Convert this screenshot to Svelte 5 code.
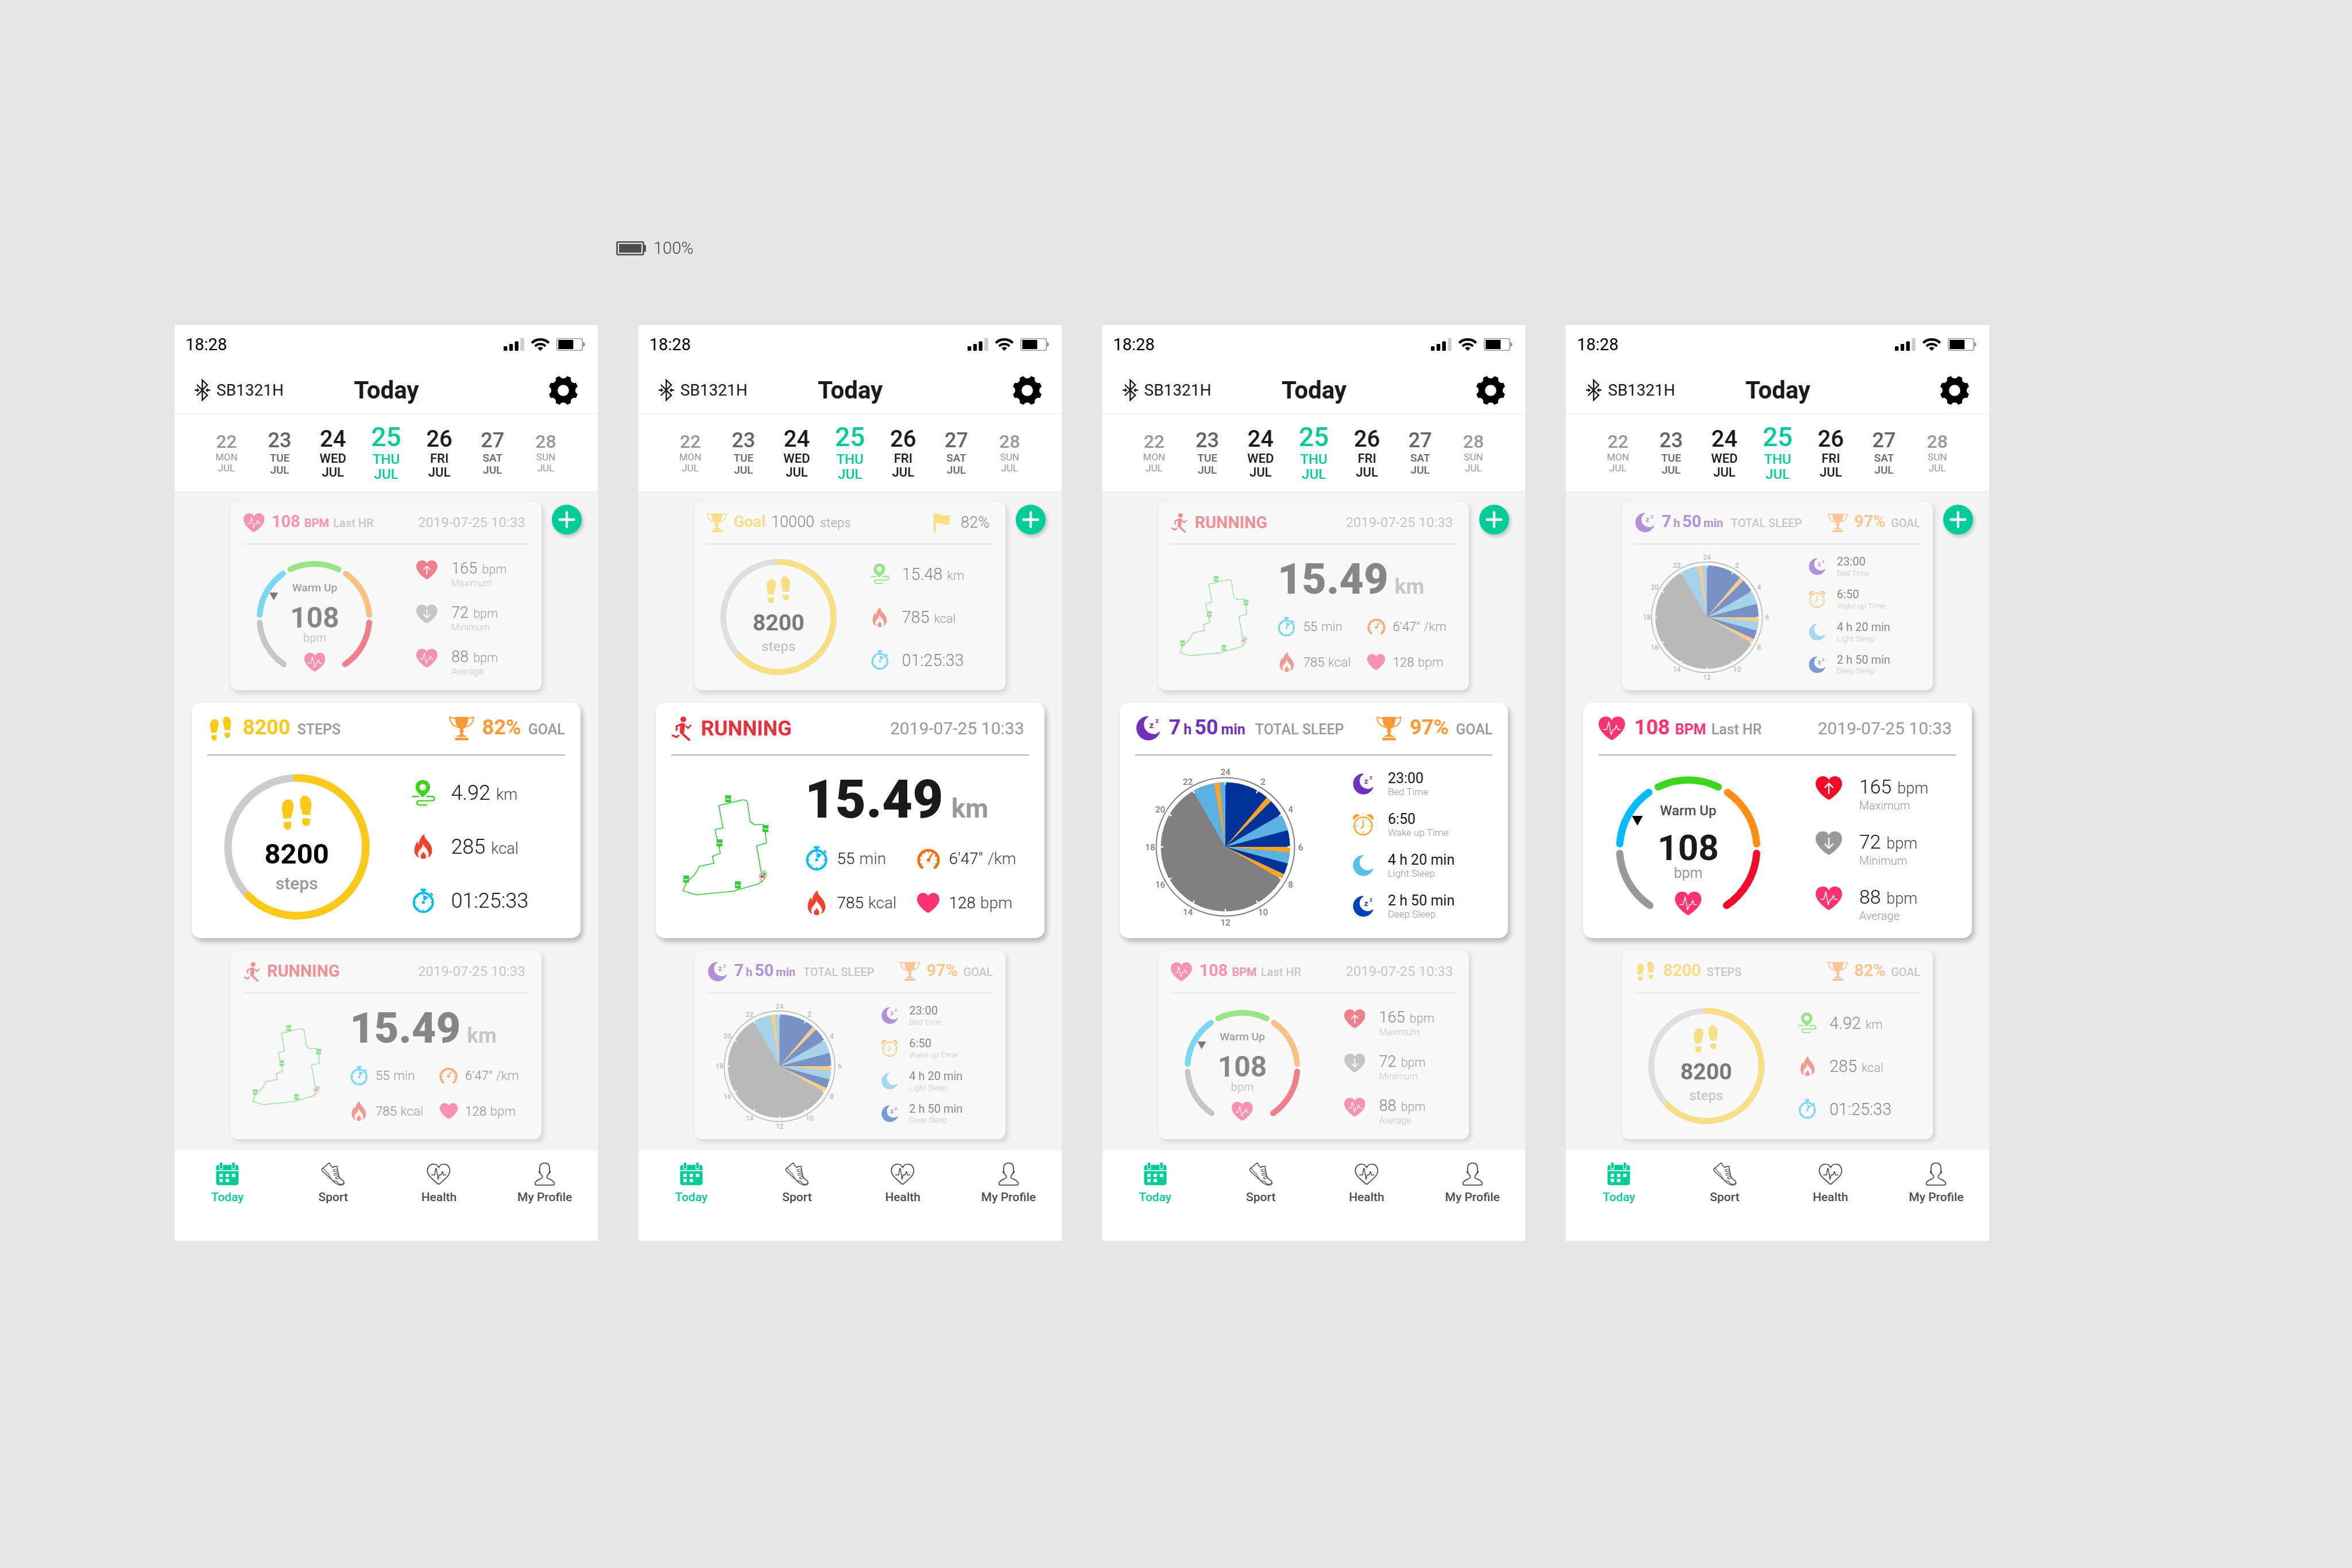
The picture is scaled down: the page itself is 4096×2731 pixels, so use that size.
<script>
  const days = [
    { num: 22, name: 'MON', size: 'far' },
    { num: 23, name: 'TUE', size: 'mid' },
    { num: 24, name: 'WED', size: 'near' },
    { num: 25, name: 'THU', size: 'today' },
    { num: 26, name: 'FRI', size: 'near' },
    { num: 27, name: 'SAT', size: 'mid' },
    { num: 28, name: 'SUN', size: 'far' }
  ];

  const tabs = [
    { label: 'Today', icon: 'calendar', active: true },
    { label: 'Sport', icon: 'shoe' },
    { label: 'Health', icon: 'health' },
    { label: 'My Profile', icon: 'person' }
  ];

  const screens = [
    ['hr', 'steps', 'running'],
    ['goal', 'running', 'sleep'],
    ['running', 'sleep', 'hr'],
    ['sleep', 'hr', 'steps']
  ];

  const stepStats = [
    { icon: 'pin', value: '4.92', unit: 'km' },
    { icon: 'flame', value: '285', unit: 'kcal' },
    { icon: 'watch', value: '01:25:33', unit: '' }
  ];

  const goalStats = [
    { icon: 'pin', value: '15.48', unit: 'km' },
    { icon: 'flame', value: '785', unit: 'kcal' },
    { icon: 'watch', value: '01:25:33', unit: '' }
  ];

  const runStats = [
    { icon: 'watch', value: '55', unit: 'min' },
    { icon: 'gauge', value: '6\'47"', unit: '/km' },
    { icon: 'flame', value: '785', unit: 'kcal' },
    { icon: 'heart', value: '128', unit: 'bpm' }
  ];

  const hrStats = [
    { icon: 'heartUp', value: 165, label: 'Maximum' },
    { icon: 'heartDown', value: 72, label: 'Minimum' },
    { icon: 'heartBeat', value: 88, label: 'Average' }
  ];

  const sleepStats = [
    { icon: 'moonPurple', value: '23:00', label: 'Bed Time' },
    { icon: 'alarm', value: '6:50', label: 'Wake up Time' },
    { icon: 'moonLight', value: '4 h 20 min', label: 'Light Sleep' },
    { icon: 'moonDeep', value: '2 h 50 min', label: 'Deep Sleep' }
  ];

  const DEEP = '#003399';
  const LIGHT = '#5ab3e0';
  const AWAKE = '#ffa426';
  const slices = [
    [-30, -10, LIGHT],
    [-10, -5, AWAKE],
    [-5, 0, LIGHT],
    [0, 40, DEEP],
    [40, 45, AWAKE],
    [45, 60, DEEP],
    [60, 75, LIGHT],
    [75, 90, DEEP],
    [90, 95, AWAKE],
    [95, 105, LIGHT],
    [105, 115, DEEP],
    [115, 120, AWAKE]
  ];
  const hours = [24, 2, 4, 6, 8, 10, 12, 14, 16, 18, 20, 22];

  const zones = [
    [-146, -94, '#999999'],
    [-86, -35, '#00bbff'],
    [-26, 26, '#3cd621'],
    [35, 86, '#ff8f12'],
    [94, 146, '#f20a26']
  ];

  const flags = [
    { x: 86, y: 9, km: 2 },
    { x: 151, y: 61, km: 1 },
    { x: 71, y: 86, km: 3 },
    { x: 13, y: 149, km: 4 },
    { x: 103, y: 159, km: 5 }
  ];

  // Angle 0 points up and grows clockwise.
  function polar(cx, cy, r, deg) {
    const a = (deg * Math.PI) / 180;
    return [cx + r * Math.sin(a), cy - r * Math.cos(a)].map((n) => n.toFixed(2)).join(' ');
  }
  function arc(cx, cy, r, from, to) {
    const large = to - from > 180 ? 1 : 0;
    return `M${polar(cx, cy, r, from)}A${r} ${r} 0 ${large} 1 ${polar(cx, cy, r, to)}`;
  }
  function slice(cx, cy, r, from, to) {
    return `${arc(cx, cy, r, from, to)}L${cx} ${cy}Z`;
  }
  function angles(n, step, start = 0) {
    return Array.from({ length: n }, (_, i) => start + i * step);
  }
</script>

{#snippet heartShape(color)}
  <path
    fill={color}
    d="M22.5 40C20 40 0 25.5 0 13C0 5 5.5 0 12 0C17 0 21 2.6 22.5 6.5C24 2.6 28 0 33 0C39.5 0 45 5 45 13C45 25.5 25 40 22.5 40Z"
  />
{/snippet}

{#snippet beat(color, width)}
  <path
    fill="none"
    stroke={color}
    stroke-width={width}
    stroke-linejoin="round"
    stroke-linecap="round"
    d="M8.6 22H13.8L17.3 8.8L21.4 31L24.8 22H27.5L30.2 15L32.8 22H36.8"
  />
{/snippet}

{#snippet moon(color, zz)}
  <svg width="41" height="43" viewBox="0 0 41 43" aria-hidden="true">
    <path
      fill={color}
      d="M20.4 .3C9 .8 0 9.5 0 21.3C0 33 9.5 42.6 21 42.6C30 42.6 38 37 40.9 28.6C41 27.6 40 27.2 39.3 27.9C36 31 32 32 28.5 31.3C20 30 13.3 24 13.3 15.5C13.3 9.5 15.5 5 20.8 1.6C21.5 1 21 .3 20.4 .3Z"
    />
    {#if zz}
      <text class="zed" x="22.5" y="20.5" font-size="15" fill={color}>z</text>
      <text class="zed" x="33.3" y="12" font-size="11" fill={color}>z</text>
    {/if}
  </svg>
{/snippet}

{#snippet icon(name)}
  {#if name === 'pin'}
    <svg width="41" height="46" viewBox="34 40 182 204" aria-hidden="true">
      <path
        fill="#3cd621"
        fill-rule="evenodd"
        d="M120 42C88 42 64 66 64 97C64 122 80 138 93 151L113 172Q120 181 127 172L147 151C160 138 176 122 176 97C176 66 152 42 120 42ZM120 73A25 25 0 1 1 119.9 73Z"
      />
      <path
        fill="none"
        stroke="#3cd621"
        stroke-width="11"
        stroke-linecap="round"
        d="M41 169.500H88M152 169.500H192A16.500 16.500 0 0 1 192 202.500H91A16.500 16.500 0 0 0 91 235.500H150"
      />
    </svg>
  {:else if name === 'flame'}
    <svg width="32" height="45" viewBox="54 456 140 198" aria-hidden="true">
      <path
        fill="#f5402a"
        d="M133 458C129 485 150 502 165 520C181 540 192 560 192 585C192 612 178 632 157 641C165 630 168 620 166 607C162 580 143 570 122 535C119 560 104 572 92 587C80 603 80 622 92 641C70 632 57 610 57 585C57 555 68 530 84 510C82 522 84 530 90 539C92 510 105 480 133 458Z"
      />
      <path
        fill="#f5402a"
        d="M126 591C128 605 146 612 146 630C146 643 137 650 125 650C112 650 103 642 103 630C103 615 122 607 126 591Z"
      />
    </svg>
  {:else if name === 'watch'}
    <svg width="38" height="44" viewBox="40 868 168 192" aria-hidden="true">
      <g fill="#00bbff">
        <rect x="103" y="870" width="44" height="17" rx="7" />
        <rect x="113" y="884" width="23" height="18" />
        <g transform="rotate(45 184 916)">
          <rect x="172" y="903" width="28" height="9" rx="4" />
          <rect x="180" y="908" width="11" height="16" />
        </g>
        <circle cx="125" cy="976" r="73" fill="none" stroke="#00bbff" stroke-width="17" />
        {#each angles(8, 45) as a}
          <rect x="121.500" y="909" width="7" height="13" rx="3" transform="rotate({a} 125 976)" />
        {/each}
        <path d="M125 923C140 923 152 929 162 939L138 962L125 960Z" />
        <circle cx="125" cy="976" r="11.500" />
      </g>
    </svg>
  {:else if name === 'gauge'}
    <svg width="40" height="35" viewBox="0 0 40 35" aria-hidden="true">
      <path
        d={arc(20, 20, 17.3, -140, 140)}
        fill="none"
        stroke="#ff6a00"
        stroke-width="4.400"
        stroke-linecap="round"
      />
      {#each angles(9, 30, -120) as a}
        <rect x="19.200" y="4" width="1.600" height="3.600" rx=".8" fill="#ff6a00" transform="rotate({a} 20 20)" />
      {/each}
      <path d="M20 20L25.600 10" stroke="#ff6a00" stroke-width="2.600" stroke-linecap="round" />
      <circle cx="20" cy="20" r="3" fill="#ff6a00" />
    </svg>
  {:else if name === 'heart'}
    <svg width="39" height="35" viewBox="0 0 45 40" aria-hidden="true">{@render heartShape('#ff3370')}</svg>
  {:else if name === 'heartUp'}
    <svg width="46" height="41" viewBox="0 0 45 40" aria-hidden="true">
      {@render heartShape('#f20a26')}
      <path fill="none" stroke="#fff" stroke-width="2.400" stroke-linecap="round" stroke-linejoin="round" d="M22.500 29V12M15.800 19L22.500 12L29.200 19" />
    </svg>
  {:else if name === 'heartDown'}
    <svg width="46" height="41" viewBox="0 0 45 40" aria-hidden="true">
      {@render heartShape('#999999')}
      <path fill="none" stroke="#fff" stroke-width="2.400" stroke-linecap="round" stroke-linejoin="round" d="M22.500 11.500V28.500M15.800 21.500L22.500 28.500L29.200 21.500" />
    </svg>
  {:else if name === 'heartBeat'}
    <svg width="46" height="41" viewBox="0 0 45 40" aria-hidden="true">
      {@render heartShape('#ff3370')}
      {@render beat('#fff', 1.5)}
    </svg>
  {:else if name === 'feet'}
    <svg viewBox="0 0 52 60" aria-hidden="true">
      <g fill="#fcc917">
        <path d="M11.500 6.300C17 6.300 20.200 11 20.200 18C20.200 26 17 31 16 39L2.400 39.800C2 32 0 28 0 21C0 12 5 6.300 11.500 6.300Z" />
        <path d="M2.700 46L16 45.300C16.200 49 16.300 51 16 53.500C15.500 57 13 59 9.800 59C6.500 59 4 57 3.400 53.500C3 51 2.800 49 2.700 46Z" />
        <path d="M39.600 0C33.500 0 31.500 6 31.500 12C31.500 20 34.700 25 35.500 32.700L49 33.600C49.300 27 51.300 22 51.300 15C51.300 6 46 0 39.600 0Z" />
        <path d="M35.700 39.300L49 40C49 43 49 45 48.500 47.500C47.800 51 45 52.800 42 52.600C38.500 52.400 36.200 50 35.800 47C35.600 44 35.600 42 35.700 39.300Z" />
      </g>
    </svg>
  {:else if name === 'trophy'}
    <svg width="44" height="42" viewBox="0 0 44 42" aria-hidden="true">
      <path
        fill="currentColor"
        d="M11 .5H33L33.400 4C33.400 12 29.500 18 25 21.500L24.500 24.500H26V27H24V29C24 31.500 26 33 29 33.300L31 35.500H13L15 33.300C18 33 20 31.500 20 29V27H18V24.500H19.500L19 21.500C14.500 18 10.600 12 10.600 4Z"
      />
      <rect x="10.300" y="37" width="23.600" height="4.500" rx="1.500" fill="currentColor" />
      <path
        fill="none"
        stroke="currentColor"
        stroke-width="2"
        stroke-linejoin="round"
        d="M11.500 3.200L8 2.600L1.300 1C1.500 9 5.500 17 18 19M32.500 3.200L36 2.600L42.700 1C42.500 9 38.500 17 26 19"
      />
    </svg>
  {:else if name === 'flag'}
    <svg width="35" height="41" viewBox="0 0 35 41" aria-hidden="true">
      <rect x="0" y="0" width="4.500" height="41" rx="1" fill="#fcc917" />
      <path fill="#fcc917" d="M4 1.500C10 .5 14 2 19 4C24 6 29 5 34.500 3V23C29 25.500 24 25.500 19 23.500C14 21.500 10 20.500 4 22Z" />
    </svg>
  {:else if name === 'runner'}
    <svg width="36" height="44" viewBox="40 30 156 192" aria-hidden="true">
      <circle cx="131" cy="56" r="22" fill="#ec2f3a" />
      <g fill="none" stroke="#ec2f3a" stroke-linecap="round" stroke-linejoin="round">
        <path stroke-width="14" d="M80 137V107L118 92" />
        <path stroke-width="18" d="M175 211L116 158" />
        <path stroke-width="14" d="M49 177L80 191L99 175" stroke-linecap="butt" />
        <path stroke-width="12" d="M49 177L80 191M151 107L167 123L187 101" />
      </g>
      <path fill="#ec2f3a" d="M108 90C118 84 140 82 144 92L138 158L110 164L104 152Z" />
    </svg>
  {:else if name === 'moonPurple'}
    {@render moon('#7030bf', true)}
  {:else if name === 'moonLight'}
    {@render moon('#59bfe6', false)}
  {:else if name === 'moonDeep'}
    {@render moon('#0040bf', true)}
  {:else if name === 'alarm'}
    <svg width="36" height="37" viewBox="0 0 36 37" aria-hidden="true">
      <g fill="none" stroke="#ffa31a" stroke-linecap="round">
        <circle cx="18" cy="20.500" r="15.400" stroke-width="2.400" />
        <path stroke-width="1.400" d="M18 8.500V10.500M18 30.500V32.500M6 20.500H8M28 20.500H30" />
        <path stroke-width="2" stroke-linejoin="round" d="M18 13V21L14.500 24.500" />
      </g>
      <path fill="#ffa31a" d="M1 11C-1.500 5 2 0 7 0C9 0 11 1 12 2.500C7.500 4 4 7 1 11ZM35 11C37.500 5 34 0 29 0C27 0 25 1 24 2.500C28.500 4 32 7 35 11Z" />
    </svg>
  {:else if name === 'calendar'}
    <svg width="40" height="41" viewBox="34 40 176 178" aria-hidden="true">
      <rect x="36" y="60" width="172" height="156" rx="20" fill="#00cc99" />
      <rect x="36" y="101" width="172" height="7" fill="#fff" />
      <g fill="#00cc99" stroke="#fff" stroke-width="6">
        <rect x="61" y="38" width="25" height="56" rx="12" />
        <rect x="156" y="38" width="25" height="56" rx="12" />
      </g>
      <path fill="#fff" d="M60 129H87V153H60ZM108 129H135V153H108ZM156 129H183V153H156ZM60 168H87V192H60ZM108 168H135V192H108Z" />
    </svg>
  {:else if name === 'shoe'}
    <svg width="42" height="42" viewBox="838 40 186 184" aria-hidden="true">
      <g fill="none" stroke="#4d4d4d" stroke-linejoin="round" stroke-linecap="round">
        <path
          stroke-width="7"
          d="M845 92L900 46Q906 44 908 54C910 66 918 72 929 81C937 71 950 71 963 72C965 100 970 135 982 160C988 172 1002 174 1012 186C1020 197 1017 211 1003 216C985 219 965 212 948 199L852 112Q842 103 845 92Z"
        />
        <path
          stroke-width="5"
          d="M858 83C862 105 880 115 893 127C903 140 903 160 930 184C945 186 952 180 960 187C967 195 964 205 984 209C996 210 1008 207 1013 200M964 96L940 98C930 99 930 112 940 113L966 110M969 123L945 127C935 130 938 142 947 141L972 137M978 149L956 153C946 156 949 168 958 167L982 162"
        />
      </g>
    </svg>
  {:else if name === 'health'}
    <svg width="42" height="38" viewBox="28 48 186 168" aria-hidden="true">
      <g fill="none" stroke="#4d4d4d" stroke-linejoin="round" stroke-linecap="round">
        <path
          stroke-width="8"
          d="M121 82C114 64 98 55 80 55C53 55 34 77 34 105C34 142 70 168 112 205Q121 213 130 205C170 168 207 142 207 105C207 77 188 55 162 55C144 55 128 64 121 82Z"
        />
        <path stroke-width="7" d="M66 138H89L99 88H102L117 174L124 138H141L150 111L159 138H175" />
      </g>
    </svg>
  {:else if name === 'person'}
    <svg width="37" height="42" viewBox="848 40 164 184" aria-hidden="true">
      <path
        fill="none"
        stroke="#4d4d4d"
        stroke-width="8"
        stroke-linejoin="round"
        d="M930 46C904 46 892 62 892 86V112C893 130 914 138 913 154C912 172 870 172 857 196Q851 217 868 217H992Q1009 217 1003 196C990 172 948 172 947 154C946 138 967 130 968 112V86C968 62 956 46 930 46Z"
      />
      <path fill="#4d4d4d" d="M888 104Q880 108 884 120Q889 130 899 132L894 104ZM972 104Q980 108 976 120Q971 130 961 132L966 104Z" />
    </svg>
  {/if}
{/snippet}

{#snippet stepRing()}
  <div class="ring">
    <svg width="254" height="254" viewBox="0 0 254 254" aria-hidden="true">
      <circle cx="127" cy="127" r="120" fill="none" stroke="#cccccc" stroke-width="13" />
      <path d={arc(127, 127, 120, 0, 225)} fill="none" stroke="#fcc917" stroke-width="13" stroke-linecap="round" />
    </svg>
    <div class="ring-text steps-text">
      <span class="feet-large">{@render icon('feet')}</span>
      <strong>8200</strong>
      <span class="ring-unit">steps</span>
    </div>
  </div>
{/snippet}

{#snippet stepBody(stats)}
  <div class="body split">
    <div class="center">{@render stepRing()}</div>
    <ul class="stats step-stats">
      {#each stats as s}
        <li>
          <span class="slot">{@render icon(s.icon)}</span>
          <span class="reading"><span class="value">{s.value}</span>{#if s.unit}<span class="unit">{s.unit}</span>{/if}</span>
        </li>
      {/each}
    </ul>
  </div>
{/snippet}

{#snippet card(type)}
  {#if type === 'steps'}
    <header class="head">
      <div class="group">
        <span class="feet-small">{@render icon('feet')}</span>
        <h2 class="line yellow"><b>8200</b><span class="tag">STEPS</span></h2>
      </div>
      <div class="group orange trophy">
        {@render icon('trophy')}
        <p class="line"><b>82%</b><span class="tag">GOAL</span></p>
      </div>
    </header>
    {@render stepBody(stepStats)}
  {:else if type === 'goal'}
    <header class="head">
      <div class="group yellow trophy">
        {@render icon('trophy')}
        <h2 class="line"><b class="goal-word">Goal</b><span class="goal-num">10000</span><span class="goal-unit">steps</span></h2>
      </div>
      <div class="group flag">
        {@render icon('flag')}
        <p class="line"><span class="goal-num">82%</span></p>
      </div>
    </header>
    {@render stepBody(goalStats)}
  {:else if type === 'running'}
    <header class="head">
      <div class="group run-title">
        {@render icon('runner')}
        <h2 class="line red"><b>RUNNING</b></h2>
      </div>
      <time class="stamp" datetime="2019-07-25T10:33">2019-07-25 10:33</time>
    </header>
    <div class="body run">
      <svg class="map" width="160" height="186" viewBox="0 0 160 186" role="img" aria-label="Running route">
        <path
          fill="none"
          stroke="#33cc33"
          stroke-width="1.600"
          stroke-linejoin="round"
          d="M109 17.500L70 27L77 66L63 69L70 99L72.500 110L58.500 115.500L61.500 127.500L35.500 133C33 141 30 146 13 161.500L7.500 175.500L30 182.500L97 176L103 173.500L139 163.500Q143 161 146 156L135.500 97L153 92.500L150.500 72L147 59.500L131.500 60.500L124.500 55L119.500 21Q118 16.500 109 17.500Z"
        />
        {#each flags as f}
          <g transform="translate({f.x} {f.y})">
            <path fill="#33cc33" d="M-5 0H5V12H1.500L0 15L-1.500 12H-5Z" />
            <text class="km" x="0" y="8" font-size="4" fill="#fff" text-anchor="middle">{f.km}km</text>
          </g>
        {/each}
        <path fill="#fff" stroke="#33cc33" stroke-width="1" d="M149 141.500A4.500 4.500 0 0 1 153.500 146C153.500 149.500 150.500 152 149 156C147.500 152 144.500 149.500 144.500 146A4.500 4.500 0 0 1 149 141.500Z" />
        <circle cx="149" cy="146" r="2.600" fill="#33cc33" />
        <path fill="#fff" stroke="#e53935" stroke-width="1" d="M145.500 146A4.500 4.500 0 0 1 150 150.500C150 154 147 156 145.500 160C144 156 141 154 141 150.500A4.500 4.500 0 0 1 145.500 146Z" />
        <circle cx="145.500" cy="150.500" r="2.600" fill="#e53935" />
      </svg>
      <div class="run-data">
        <p class="distance"><strong>15.49</strong><span>km</span></p>
        <ul class="metrics">
          {#each runStats as s}
            <li>
              <span class="slot">{@render icon(s.icon)}</span>
              <span class="reading"><span class="value">{s.value}</span><span class="unit">{s.unit}</span></span>
            </li>
          {/each}
        </ul>
      </div>
    </div>
  {:else if type === 'sleep'}
    <header class="head">
      <div class="group moon-title">
        {@render icon('moonPurple')}
        <h2 class="line purple sleep-line"><b>7</b><small>h</small><b>50</b><small>min</small><span class="tag">TOTAL SLEEP</span></h2>
      </div>
      <div class="group orange trophy">
        {@render icon('trophy')}
        <p class="line"><b>97%</b><span class="tag">GOAL</span></p>
      </div>
    </header>
    <div class="body split">
      <div class="center">
        <svg class="pie" width="300" height="290" viewBox="0 0 300 290" role="img" aria-label="Sleep phases by hour">
          <circle cx="152" cy="145" r="120.500" fill="none" stroke="#808080" stroke-width="2" />
          <circle cx="152" cy="145" r="112.500" fill="#808080" />
          {#each slices as [from, to, color]}
            <path d={slice(152, 145, 112.5, from, to)} fill={color} />
          {/each}
          {#each hours as h, i}
            <path d="M152 32V36" stroke="#fff" stroke-width="2.400" stroke-linecap="round" transform="rotate({i * 30} 152 145)" />
            <text
              class="hour"
              x={152 + 131 * Math.sin((i * Math.PI) / 6)}
              y={150.5 - 131 * Math.cos((i * Math.PI) / 6)}
              text-anchor="middle">{h}</text>
          {/each}
        </svg>
      </div>
      <ul class="stats sleep-stats">
        {#each sleepStats as s}
          <li>
            <span class="slot">{@render icon(s.icon)}</span>
            <span class="pair"><span class="value">{s.value}</span><span class="caption">{s.label}</span></span>
          </li>
        {/each}
      </ul>
    </div>
  {:else if type === 'hr'}
    <header class="head">
      <div class="group hr-title">
        {@render icon('heartBeat')}
        <h2 class="line pink"><b>108</b><small>BPM</small><span class="tag">Last HR</span></h2>
      </div>
      <time class="stamp" datetime="2019-07-25T10:33">2019-07-25 10:33</time>
    </header>
    <div class="body split">
      <div class="center">
        <div class="ring">
          <svg width="254" height="254" viewBox="0 0 254 254" aria-hidden="true">
            {#each zones as [from, to, color]}
              <path d={arc(127, 127, 119.5, from, to)} fill="none" stroke={color} stroke-width="12.600" stroke-linecap="round" />
            {/each}
            <path d="M29 70H48L38.500 87Z" />
          </svg>
          <div class="ring-text hr-text">
            <span class="zone">Warm Up</span>
            <strong>108</strong>
            <span class="hr-unit">bpm</span>
            {@render icon('heartBeat')}
          </div>
        </div>
      </div>
      <ul class="stats hr-stats">
        {#each hrStats as s}
          <li>
            <span class="slot">{@render icon(s.icon)}</span>
            <span class="pair">
              <span class="reading"><span class="value">{s.value}</span><span class="unit">bpm</span></span>
              <span class="caption">{s.label}</span>
            </span>
          </li>
        {/each}
      </ul>
    </div>
  {/if}
{/snippet}

<main class="page">
  <div class="power">
    <svg width="52" height="25" viewBox="0 0 52 25" aria-hidden="true">
      <rect x="1.500" y="1.500" width="46" height="22" rx="2" fill="none" stroke="#4d4d4d" stroke-width="2.600" />
      <rect x="5" y="5" width="39" height="15" fill="#4d4d4d" />
      <rect x="48" y="6.500" width="4" height="12" rx="1.500" fill="#4d4d4d" />
    </svg>
    <span>100%</span>
  </div>

  <div class="screens">
    {#each screens as cards}
      <section class="phone">
        <div class="status">
          <span>18:28</span>
          <div class="signals">
            <svg width="36" height="22" viewBox="0 0 36 22" aria-hidden="true">
              <rect x="0" y="14" width="6.400" height="8" rx="1.600" />
              <rect x="9.800" y="10" width="6.400" height="12" rx="1.600" />
              <rect x="19.500" y="5.500" width="6.400" height="16.500" rx="1.600" />
              <rect x="29.300" y="0" width="6.400" height="22" rx="1.600" fill="#cccccc" />
            </svg>
            <svg width="32" height="22" viewBox="0 0 32 22" aria-hidden="true">
              <path fill="none" stroke="#000" stroke-width="4.400" d="M1.200 8.300C9.500 .2 22.500 .2 30.800 8.300" />
              <path fill="none" stroke="#000" stroke-width="4" d="M6.800 14C12 9 20 9 25.200 14" />
              <path d="M16 22L11.300 17.300Q16 13.300 20.700 17.300Z" />
            </svg>
            <svg width="50" height="22" viewBox="0 0 50 22" aria-hidden="true">
              <rect x=".8" y=".8" width="44.400" height="20.400" rx="3" fill="none" stroke="#999999" stroke-width="1.600" />
              <rect x="3.300" y="3" width="26" height="16" />
              <path fill="#999999" d="M46 7Q50 7.500 50 11Q50 14.500 46 15Z" />
            </svg>
          </div>
        </div>

        <header class="bar">
          <div class="device">
            <svg width="27" height="41" viewBox="0 0 27 41" aria-hidden="true">
              <g fill="none" stroke="#1a1a1a" stroke-width="2.400">
                <path d="M3.800 11L22 29.500L13.300 38V3L22 11.500L3.800 30" />
                <path d="M0 20.500H5M27 20.500H22" />
              </g>
              <path fill="#1a1a1a" d="M4 17L8.500 20.500L4 24ZM23 17L18.500 20.500L23 24Z" />
            </svg>
            <span>SB1321H</span>
          </div>
          <h1>Today</h1>
          <button class="settings" aria-label="Settings">
            <svg width="52" height="52" viewBox="0 0 52 52" aria-hidden="true">
              <circle cx="26" cy="26" r="25.600" />
              <g fill="#fff">
                <circle cx="26" cy="26" r="9.800" />
                {#each angles(8, 45) as a}
                  <circle cx="26" cy="-1.500" r="6.600" transform="rotate({a} 26 26)" />
                {/each}
              </g>
            </svg>
          </button>
        </header>

        <div class="days">
          {#each days as d}
            <button class="day {d.size}">
              <span class="num">{d.num}</span>
              <span class="name">{d.name}</span>
              <span class="name">JUL</span>
            </button>
          {/each}
        </div>

        <div class="feed">
          <button class="add" aria-label="Add">
            <svg width="30" height="30" viewBox="0 0 30 30" aria-hidden="true">
              <path d="M15 2.500V27.500M2.500 15H27.500" stroke="#fff" stroke-width="4.400" stroke-linecap="round" />
            </svg>
          </button>
          {#each cards as type, i}
            <div class={i === 1 ? 'seat' : 'seat side'}>
              <article class="card">{@render card(type)}</article>
            </div>
          {/each}
        </div>

        <nav class="tabs">
          {#each tabs as t}
            <a href="#{t.icon}" class:active={t.active}>
              <span class="tab-icon">{@render icon(t.icon)}</span>
              <span>{t.label}</span>
            </a>
          {/each}
        </nav>
      </section>
    {/each}
  </div>
</main>

<style>
  :global(body) {
    background: #e6e6e6;
  }

  .page,
  .page * {
    box-sizing: border-box;
  }

  .page {
    min-height: 100vh;
    padding: 415px 632px 0 304px;
    font-family: Roboto, 'Liberation Sans', sans-serif;
    color: #1a1a1a;
    background: #e6e6e6;
  }

  .page svg {
    display: block;
    flex: none;
  }

  h1,
  h2,
  p,
  ul {
    margin: 0;
    padding: 0;
    font-weight: 400;
    list-style: none;
  }

  button {
    padding: 0;
    border: 0;
    background: none;
    font: inherit;
    color: inherit;
    cursor: pointer;
  }

  .power {
    display: flex;
    align-items: center;
    gap: 13px;
    height: 34px;
    margin-bottom: 117px;
    padding-left: 769px;
    font-size: 29px;
    font-weight: 300;
    color: #4d4d4d;
  }

  .screens {
    display: grid;
    grid-template-columns: repeat(4, minmax(0, 1fr));
    gap: 71px;
  }

  .phone {
    background: #fff;
  }

  .status {
    display: flex;
    align-items: center;
    justify-content: space-between;
    height: 68px;
    padding: 0 22px 0 19px;
    font-size: 29px;
    color: #000;
  }

  .signals {
    display: flex;
    gap: 12px;
  }

  .bar {
    display: grid;
    grid-template-columns: 1fr auto 1fr;
    align-items: center;
    height: 88px;
    padding: 5px 34px 0 35px;
    border-bottom: 2px solid #f2f2f2;
  }

  .device {
    display: flex;
    align-items: center;
    gap: 11px;
    font-size: 28px;
  }

  h1 {
    font-size: 42px;
    font-weight: 700;
  }

  .settings {
    justify-self: end;
  }

  .days {
    display: grid;
    grid-template-columns: repeat(7, minmax(0, 1fr));
    height: 134px;
    padding: 5px 44px 0;
  }

  .day {
    display: flex;
    flex-direction: column;
    align-items: center;
    font-weight: 500;
  }

  .num {
    display: flex;
    align-items: flex-end;
    height: 60px;
  }

  .far {
    color: #999;
  }
  .far .num {
    font-size: 32px;
    line-height: 36px;
  }
  .far .name {
    font-size: 17px;
    line-height: 19px;
    font-weight: 400;
  }
  .mid {
    color: #666;
  }
  .mid .num {
    font-size: 36px;
    line-height: 40px;
  }
  .mid .name {
    font-size: 19px;
    line-height: 21px;
  }
  .near .num {
    font-size: 40px;
    line-height: 44px;
  }
  .near .name {
    font-size: 22px;
    line-height: 24px;
  }
  .today {
    color: #00cc99;
  }
  .today .num {
    font-size: 46px;
    line-height: 52px;
  }
  .today .name {
    font-size: 24px;
    line-height: 26px;
  }

  .feed {
    position: relative;
    display: flex;
    flex-direction: column;
    gap: 22px;
    padding: 16px 30px;
    background: #f4f4f4;
    border-top: 2px solid #eee;
  }

  .add {
    position: absolute;
    top: 21px;
    right: 28px;
    display: grid;
    place-items: center;
    width: 52px;
    height: 52px;
    border-radius: 50%;
    background: #00cc99;
    box-shadow: 3px 4px 6px rgba(0, 0, 0, 0.2);
  }

  .side {
    padding: 0 68px;
  }

  .side .card {
    zoom: 0.8;
    opacity: 0.5;
  }

  .card {
    padding: 0 27px;
    border-radius: 16px;
    background: #fff;
    box-shadow: 4px 6px 10px rgba(0, 0, 0, 0.25);
  }

  .head {
    display: flex;
    align-items: center;
    justify-content: space-between;
    height: 92px;
    border-bottom: 2px solid #b3b3b3;
  }

  .group {
    display: flex;
    align-items: center;
  }

  .feet-small {
    width: 37px;
    margin: 0 20px 0 5px;
  }

  .line {
    display: flex;
    align-items: baseline;
    gap: 12px;
    font-size: 36px;
    line-height: 42px;
    white-space: nowrap;
  }

  .line b {
    font-weight: 700;
  }

  .line small {
    font-size: 25px;
    font-weight: 700;
  }

  .tag {
    font-size: 25px;
    font-weight: 500;
    color: #999;
  }

  .trophy {
    gap: 14px;
  }
  .yellow {
    color: #fcc917;
  }
  .orange {
    color: #ff9933;
  }
  .red {
    color: #ec2f3a;
  }
  .purple {
    color: #7030bf;
  }
  .pink {
    color: #ff3370;
  }

  .goal-word {
    font-size: 34px;
  }
  .goal-num {
    font-size: 34px;
    font-weight: 300;
    color: #1a1a1a;
  }
  .goal-unit {
    font-size: 28px;
    font-weight: 300;
    color: #4d4d4d;
  }
  .flag {
    gap: 24px;
    padding-right: 7px;
  }

  .run-title {
    gap: 16px;
  }
  .moon-title {
    gap: 16px;
    padding-left: 2px;
  }
  .sleep-line {
    gap: 5px;
  }
  .sleep-line .tag {
    padding-left: 12px;
  }
  .hr-title {
    gap: 16px;
  }
  .hr-title .line {
    gap: 9px;
  }

  .stamp {
    padding-right: 8px;
    font-size: 30px;
    color: #999;
  }

  .body {
    height: 318px;
  }

  .split {
    display: grid;
    grid-template-columns: 1fr 1fr;
  }

  .center {
    display: grid;
    place-items: center;
  }

  .ring {
    display: grid;
  }

  .ring > * {
    grid-area: 1 / 1;
  }

  .ring-text {
    display: flex;
    flex-direction: column;
    align-items: center;
  }

  .steps-text {
    padding-top: 38px;
  }

  .feet-large {
    width: 52px;
    margin-bottom: 15px;
  }

  .steps-text strong {
    font-size: 49px;
    line-height: 54px;
    color: #000;
  }

  .ring-unit {
    padding-top: 6px;
    font-size: 30px;
    line-height: 36px;
    font-weight: 500;
    color: #999;
  }

  .hr-text {
    padding-top: 46px;
  }

  .zone {
    margin-bottom: 20px;
    font-size: 24px;
    line-height: 30px;
    font-weight: 500;
    color: #4d4d4d;
  }

  .hr-text strong {
    font-size: 62px;
    line-height: 60px;
  }

  .hr-unit {
    margin-bottom: 18px;
    font-size: 25px;
    line-height: 28px;
    color: #999;
  }

  .stats li,
  .metrics li {
    display: flex;
    align-items: center;
  }

  .slot {
    display: grid;
    place-items: center;
    flex: none;
  }

  .reading {
    display: flex;
    align-items: baseline;
    gap: 10px;
    white-space: nowrap;
  }

  .value {
    font-size: 35px;
    font-weight: 300;
  }

  .unit {
    font-size: 27px;
    font-weight: 300;
    color: #4d4d4d;
  }

  .pair {
    display: flex;
    flex-direction: column;
    white-space: nowrap;
  }

  .caption {
    font-weight: 300;
    color: #999;
  }

  .step-stats {
    align-self: center;
    padding-left: 42px;
  }

  .step-stats li {
    gap: 25px;
    height: 94px;
  }

  .step-stats .value {
    font-size: 36px;
  }

  .step-stats .slot,
  .hr-stats .slot {
    width: 46px;
  }

  .hr-stats {
    padding: 36px 0 0 66px;
  }

  .hr-stats li {
    align-items: flex-start;
    gap: 30px;
    height: 96px;
  }

  .hr-stats .value {
    font-size: 34px;
    line-height: 36px;
  }

  .hr-stats .caption {
    font-size: 20px;
    line-height: 28px;
  }

  .sleep-stats {
    align-self: center;
    padding: 0 0 6px 68px;
  }

  .sleep-stats li {
    gap: 25px;
    height: 71px;
  }

  .sleep-stats .slot {
    width: 36px;
  }

  .sleep-stats .slot :global(svg) {
    width: 36px;
    height: 37px;
  }

  .sleep-stats .value {
    font-size: 25px;
    line-height: 27px;
    font-weight: 400;
  }

  .sleep-stats .caption {
    font-size: 17px;
    line-height: 20px;
  }

  .hour {
    font-size: 15px;
    font-weight: 500;
    fill: #808080;
  }

  .zed,
  .km {
    font-weight: 700;
  }

  .run {
    display: flex;
    justify-content: space-between;
    padding-top: 27px;
  }

  .map {
    margin: 33px 0 0 13px;
  }

  .run-data {
    width: 390px;
  }

  .distance {
    display: flex;
    align-items: baseline;
    gap: 14px;
    font-weight: 700;
  }

  .distance strong {
    font-size: 92px;
    line-height: 100px;
  }

  .distance span {
    font-size: 46px;
    color: #999;
  }

  .metrics {
    display: grid;
    grid-template-columns: 1fr 1fr;
    padding-top: 14px;
  }

  .metrics li {
    gap: 16px;
    height: 77px;
  }

  .metrics .slot {
    width: 40px;
  }

  .metrics .reading {
    gap: 8px;
  }

  .metrics .value,
  .metrics .unit {
    font-size: 28px;
  }

  .tabs {
    display: grid;
    grid-template-columns: repeat(4, minmax(0, 1fr));
    height: 161px;
    padding-top: 22px;
    border-top: 2px solid #eee;
  }

  .tabs a {
    display: flex;
    flex-direction: column;
    align-items: center;
    gap: 6px;
    font-size: 21px;
    line-height: 26px;
    font-weight: 500;
    color: #4d4d4d;
    text-decoration: none;
  }

  .tab-icon {
    display: grid;
    place-items: center;
    height: 42px;
  }

  .tabs .active {
    color: #00cc99;
  }
</style>
